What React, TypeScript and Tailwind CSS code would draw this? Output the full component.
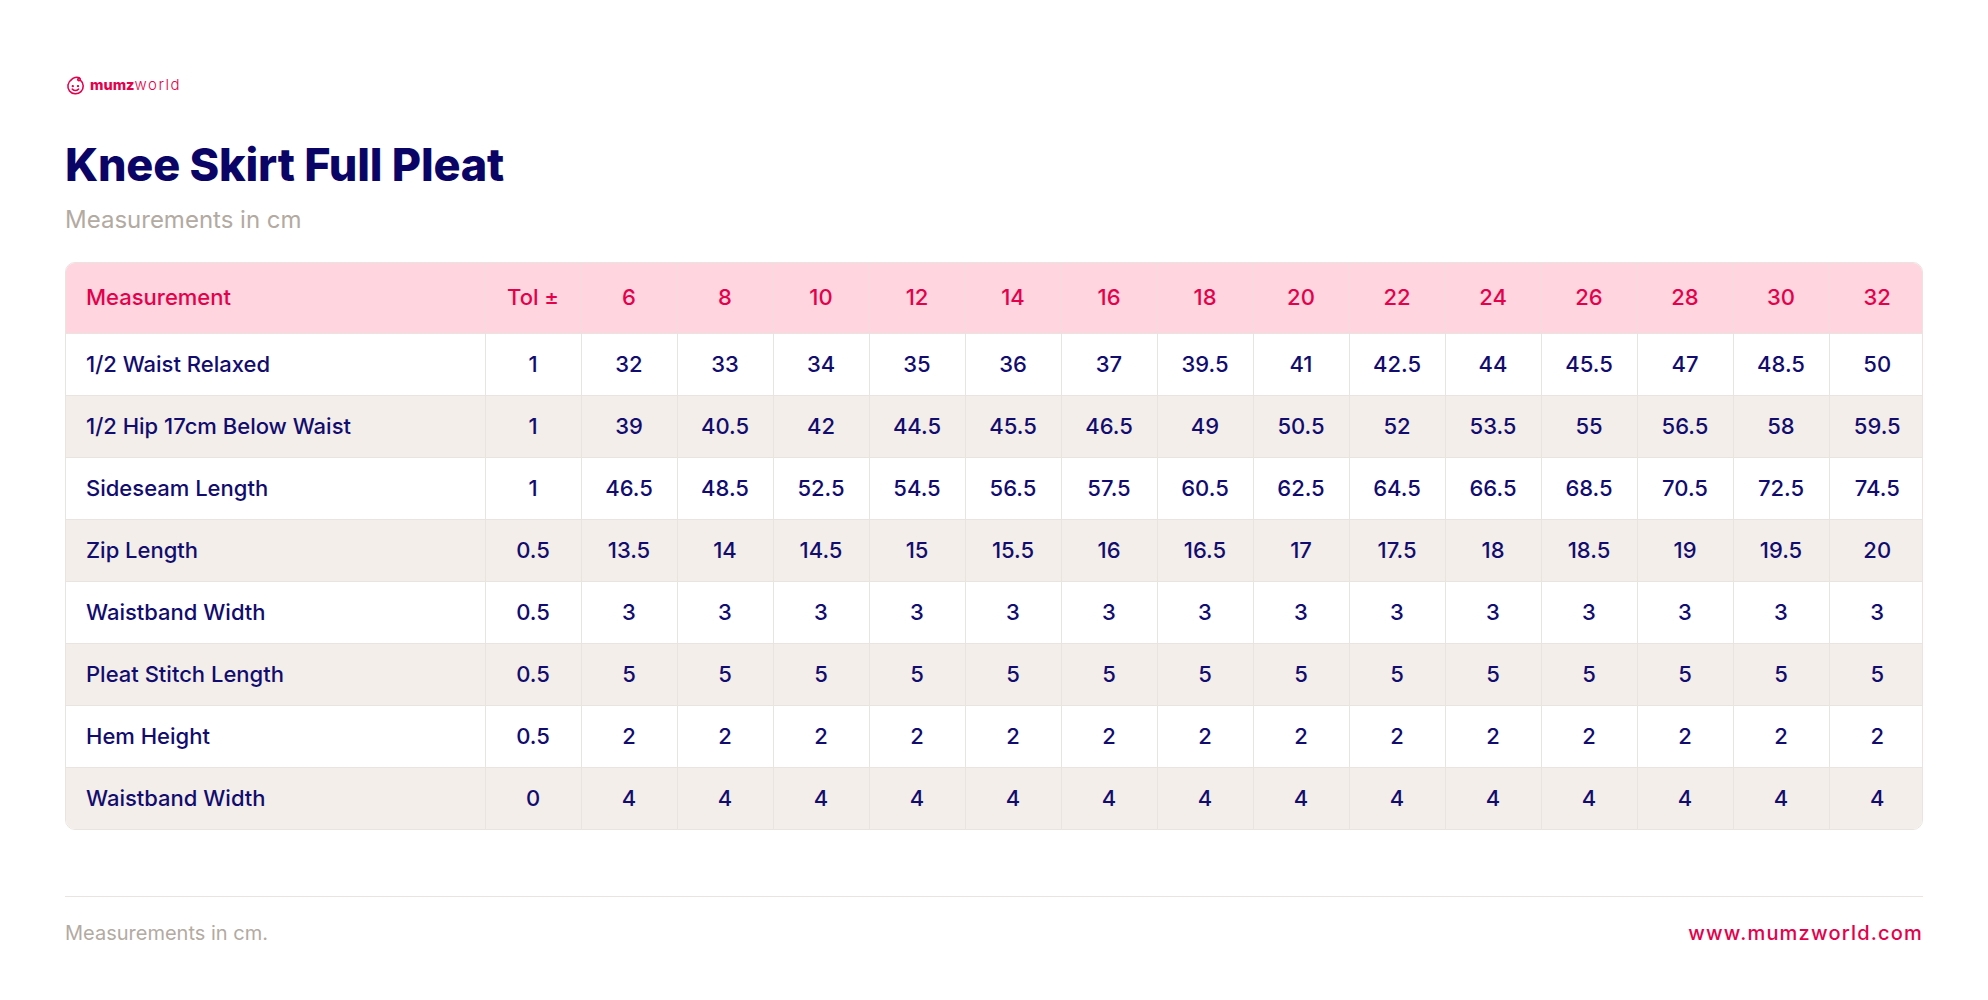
import React from "react";

const sizes = ["6", "8", "10", "12", "14", "16", "18", "20", "22", "24", "26", "28", "30", "32"];

const rows: { name: string; tol: string; values: string[] }[] = [
  { name: "1/2 Waist Relaxed", tol: "1", values: ["32", "33", "34", "35", "36", "37", "39.5", "41", "42.5", "44", "45.5", "47", "48.5", "50"] },
  { name: "1/2 Hip 17cm Below Waist", tol: "1", values: ["39", "40.5", "42", "44.5", "45.5", "46.5", "49", "50.5", "52", "53.5", "55", "56.5", "58", "59.5"] },
  { name: "Sideseam Length", tol: "1", values: ["46.5", "48.5", "52.5", "54.5", "56.5", "57.5", "60.5", "62.5", "64.5", "66.5", "68.5", "70.5", "72.5", "74.5"] },
  { name: "Zip Length", tol: "0.5", values: ["13.5", "14", "14.5", "15", "15.5", "16", "16.5", "17", "17.5", "18", "18.5", "19", "19.5", "20"] },
  { name: "Waistband Width", tol: "0.5", values: Array(14).fill("3") },
  { name: "Pleat Stitch Length", tol: "0.5", values: Array(14).fill("5") },
  { name: "Hem Height", tol: "0.5", values: Array(14).fill("2") },
  { name: "Waistband Width", tol: "0", values: Array(14).fill("4") },
];

function Logo() {
  return (
    <div className="flex items-center gap-[4px] h-[20px]">
      <svg width="21" height="21" viewBox="0 0 20 20" fill="none" stroke="#e5004c" strokeWidth="1.5" strokeLinecap="round">
        <path d="M6.2 4.4 A7.3 7.3 0 1 0 14.6 4.9" />
        <path d="M6.2 4.4 C7.5 2.2 11.5 1.6 13.6 2.6 C15.2 3.4 14.6 5.6 13 5.4 C11.8 5.2 11.9 3.9 12.8 3.7" />
        <circle cx="7.4" cy="10.6" r="0.6" fill="#e5004c" strokeWidth="1" />
        <circle cx="12.4" cy="10.6" r="0.6" fill="#e5004c" strokeWidth="1" />
        <path d="M6.9 13.4 Q9.9 16.2 12.9 13.4" />
      </svg>
      <div className="flex items-baseline leading-none text-[#e5004c] font-['Inter',sans-serif]">
        <span className="text-[14.5px] font-extrabold">mumz</span>
        <span className="text-[15px] font-light tracking-[0.1em]">world</span>
      </div>
    </div>
  );
}

export default function App() {
  return (
    <div className="min-h-screen bg-white font-['Inter',sans-serif] px-[65px] pt-[75px]">
      <Logo />

      <h1 className="mt-[47px] text-[45px] leading-none font-extrabold tracking-[-0.005em] text-[#0b0467]">
        Knee Skirt Full Pleat
      </h1>
      <p className="mt-[21px] text-[24px] leading-none text-[#b3aaa2]">Measurements in cm</p>

      <div className="mt-[30px] rounded-[10px] border border-[#e9e4df] overflow-hidden">
        <table className="w-full table-fixed border-collapse text-[22px] font-medium">
          <colgroup>
            <col className="w-[419px]" />
            <col className="w-[96px]" />
            {sizes.map((s) => (
              <col key={s} className="w-[96px]" />
            ))}
          </colgroup>
          <thead>
            <tr className="h-[70px] bg-[#ffd5df] text-[#e5004c]">
              <th className="pl-5 text-left font-medium">Measurement</th>
              <th className="border-l border-[#eedde1] text-center font-medium">Tol ±</th>
              {sizes.map((s) => (
                <th key={s} className="border-l border-[#eedde1] text-center font-medium">
                  {s}
                </th>
              ))}
            </tr>
          </thead>
          <tbody className="text-[#120c6e]">
            {rows.map((r, i) => (
              <tr key={i} className={`h-[62px] border-t border-[#e9e4df] ${i % 2 === 1 ? "bg-[#f3eee9]" : "bg-white"}`}>
                <td className="pl-5 text-left">{r.name}</td>
                <td className="border-l border-[#e9e4df] text-center">{r.tol}</td>
                {r.values.map((v, j) => (
                  <td key={j} className="border-l border-[#e9e4df] text-center">
                    {v}
                  </td>
                ))}
              </tr>
            ))}
          </tbody>
        </table>
      </div>

      <footer className="mt-[66px] border-t border-[#e9e4df] pt-[26px] flex items-baseline justify-between">
        <span className="text-[20px] leading-none text-[#b3aaa2]">Measurements in cm.</span>
        <span className="text-[20px] leading-none font-medium tracking-[0.06em] text-[#e5004c]">www.mumzworld.com</span>
      </footer>
    </div>
  );
}
